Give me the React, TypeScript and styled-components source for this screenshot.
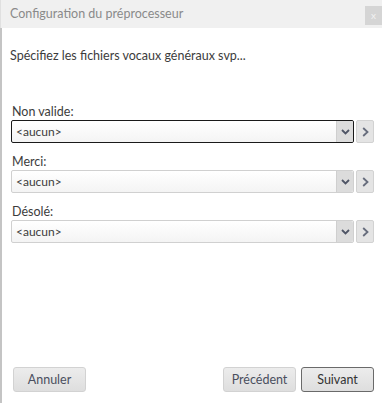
import styled, { createGlobalStyle } from 'styled-components';

const Global = createGlobalStyle`
  html, body {
    margin: 0;
    padding: 0;
    background: #ffffff;
  }
  body {
    font-family: Lato, 'Open Sans', 'Liberation Sans', sans-serif;
  }
`;

const Dialog = styled.div`
  width: 382px;
  height: 403px;
  display: flex;
  flex-direction: column;
  box-sizing: border-box;
  border-left: 2px solid #c4c4c4;
  background: #ffffff;
`;

const Header = styled.div`
  height: 28px;
  display: flex;
  align-items: flex-start;
  justify-content: space-between;
  background: #f0f0f0;
  margin-left: -2px;
  border-left: 1px solid #e0e0e0;
`;

const Title = styled.div`
  padding: 6px 0 0 9px;
  font-size: 12.5px;
  line-height: 16px;
  color: #8a8a8a;
`;

const Close = styled.div`
  margin-top: 6px;
  width: 17px;
  height: 19px;
  background: #d5d5d5;
  color: #f2f2f2;
  font-size: 10px;
  line-height: 18px;
  text-align: center;
`;

const Body = styled.div`
  flex: 1;
  display: flex;
  flex-direction: column;
  padding: 20px 8px 0 8px;
`;

const Intro = styled.div`
  font-size: 12.5px;
  line-height: 16px;
  color: #3c3c3c;
  margin-bottom: 40px;
`;

const Field = styled.div`
  display: flex;
  flex-direction: column;
  margin-bottom: 11px;
`;

const Label = styled.div`
  font-size: 12.5px;
  line-height: 16px;
  color: #3c3c3c;
  padding-left: 2px;
`;

const Row = styled.div`
  display: flex;
  align-items: center;
  gap: 2px;
`;

const Select = styled.div<{ $focused?: boolean }>`
  flex: 1;
  height: 23px;
  box-sizing: border-box;
  margin-left: 1px;
  display: flex;
  align-items: center;
  justify-content: space-between;
  border: 1px solid ${(p) => (p.$focused ? '#1a1a1a' : '#d0d0d0')};
  border-radius: 2px;
  background: linear-gradient(#ffffff, #f4f4f4);
  padding-left: 4px;
  font-size: 12px;
  color: #3c3c3c;
`;

const Chevron = styled.div`
  width: 16px;
  height: 21px;
  display: flex;
  align-items: center;
  justify-content: center;
  background: #dcdcdc;
  border-left: 1px solid #cfcfcf;
  border-radius: 0 2px 2px 0;
`;

const Next = styled.div`
  width: 18px;
  height: 23px;
  box-sizing: border-box;
  display: flex;
  align-items: center;
  justify-content: center;
  background: #e4e4e4;
  border: 1px solid #d2d2d2;
  border-radius: 2px;
`;

const Footer = styled.div`
  display: flex;
  align-items: center;
  padding: 0 8px 11px 11px;
  gap: 5px;
`;

const Spacer = styled.div`
  flex: 1;
`;

const Button = styled.button<{ $primary?: boolean }>`
  width: 73px;
  height: 25px;
  box-sizing: border-box;
  border: 1px solid ${(p) => (p.$primary ? '#6a6a6a' : '#d2d2d2')};
  border-radius: 3px;
  background: linear-gradient(#ececec, #dedede);
  font-family: Lato, 'Open Sans', 'Liberation Sans', sans-serif;
  font-size: 12.5px;
  color: ${(p) => (p.$primary ? '#333333' : '#4a4f5e')};
  padding: 0;
`;

function ChevronDown() {
  return (
    <svg width="9" height="6" viewBox="0 0 9 6">
      <path d="M1 1 L4.5 4.5 L8 1" fill="none" stroke="#4f5566" strokeWidth="1.8" />
    </svg>
  );
}

function ChevronRight() {
  return (
    <svg width="7" height="10" viewBox="0 0 7 10">
      <path d="M1.2 1 L5.5 5 L1.2 9" fill="none" stroke="#666c7c" strokeWidth="1.8" />
    </svg>
  );
}

export default function App() {
  const fields = [
    { label: 'Non valide:', focused: true },
    { label: 'Merci:', focused: false },
    { label: 'Désolé:', focused: false },
  ];

  return (
    <>
      <Global />
      <Dialog>
        <Header>
          <Title>Configuration du préprocesseur</Title>
          <Close>x</Close>
        </Header>
        <Body>
          <Intro>Spécifiez les fichiers vocaux généraux svp...</Intro>
          {fields.map((f) => (
            <Field key={f.label}>
              <Label>{f.label}</Label>
              <Row>
                <Select $focused={f.focused}>
                  <span>&lt;aucun&gt;</span>
                  <Chevron>
                    <ChevronDown />
                  </Chevron>
                </Select>
                <Next>
                  <ChevronRight />
                </Next>
              </Row>
            </Field>
          ))}
        </Body>
        <Footer>
          <Button>Annuler</Button>
          <Spacer />
          <Button>Précédent</Button>
          <Button $primary>Suivant</Button>
        </Footer>
      </Dialog>
    </>
  );
}
